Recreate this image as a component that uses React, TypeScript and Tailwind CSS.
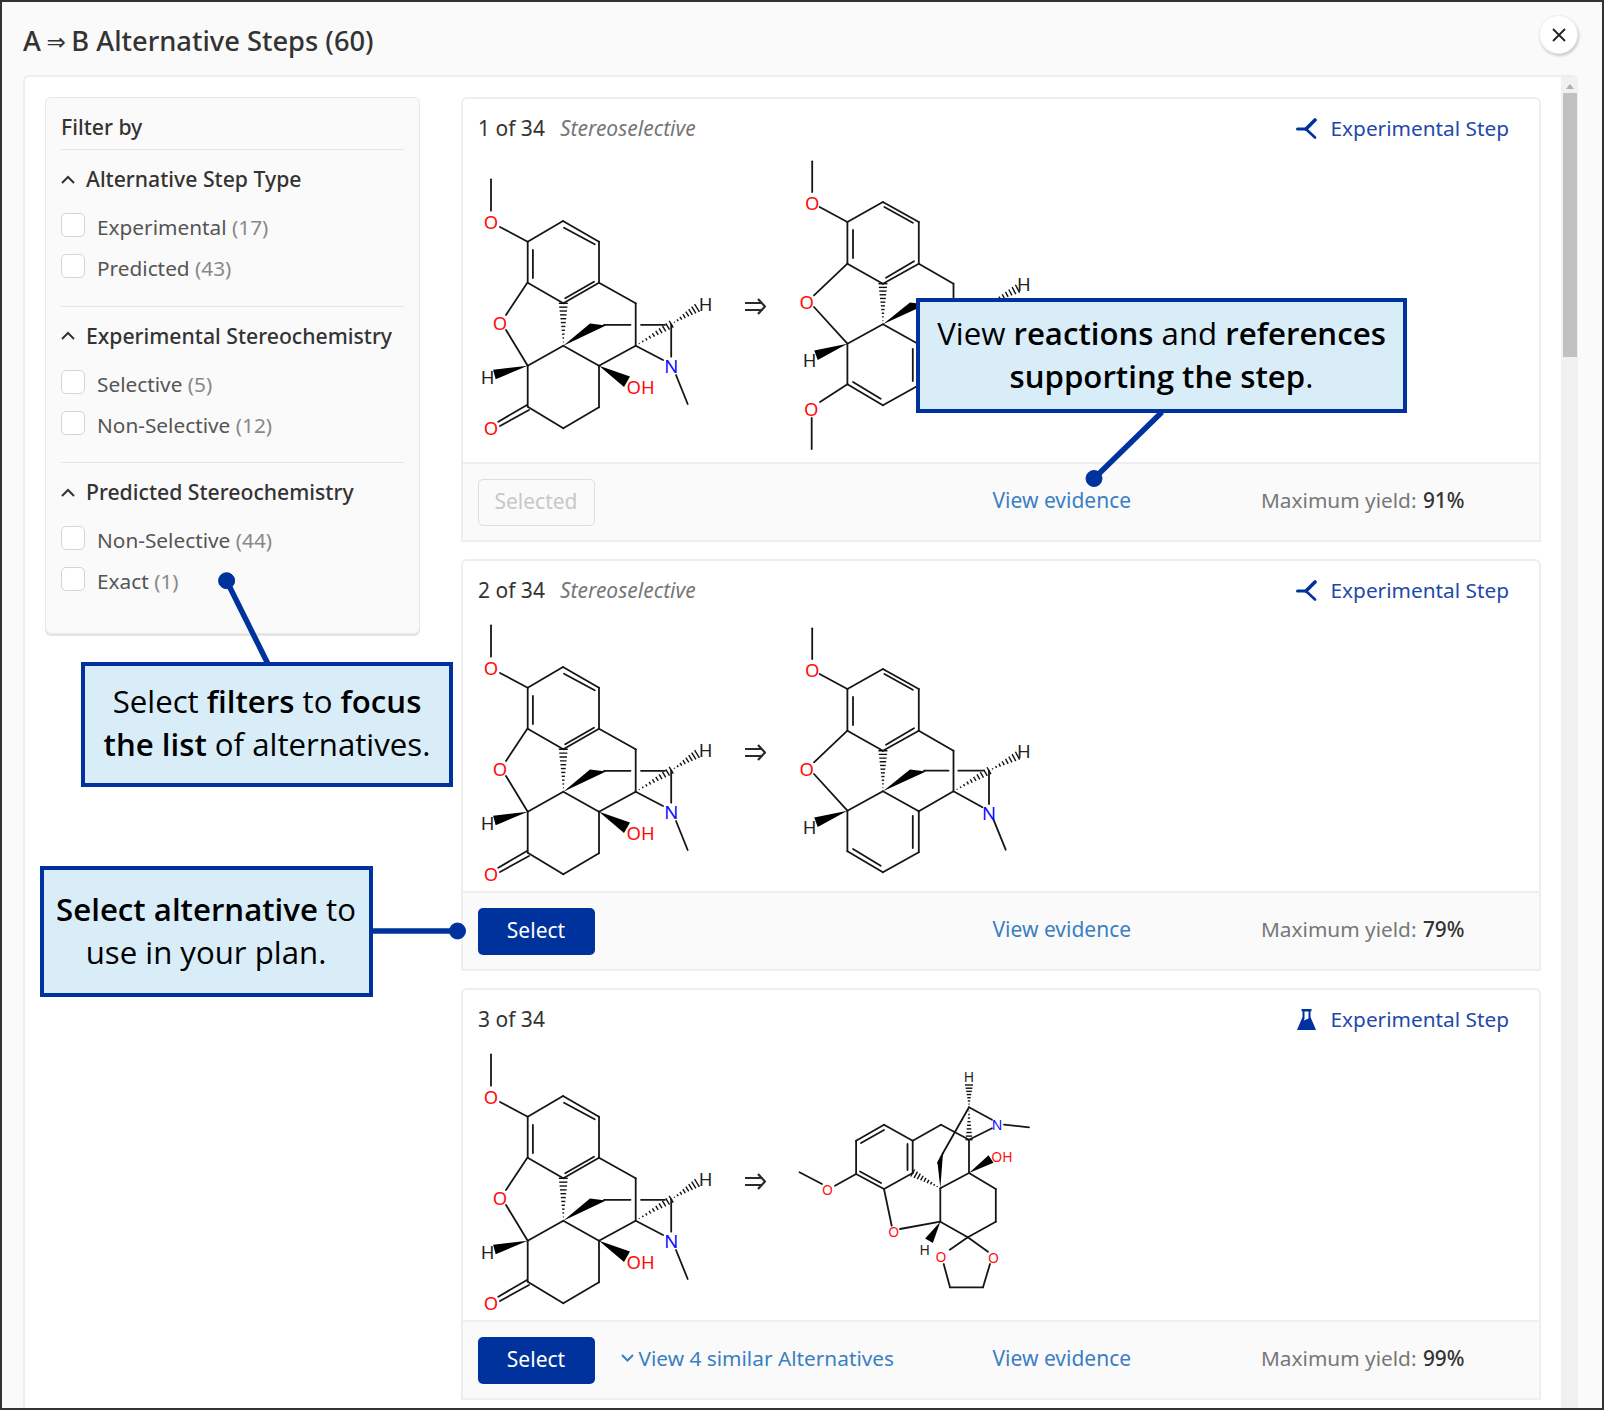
import React from 'react';

type L = number[];
type Lab = [string, number, number, string];

const RED = '#ff0d0d';
const BLUE = '#0d0dff';
const BLK = '#222222';

function wedgePts(x1: number, y1: number, x2: number, y2: number, w: number) {
  const dx = x2 - x1, dy = y2 - y1, n = Math.hypot(dx, dy);
  const px = (-dy / n) * w, py = (dx / n) * w;
  return `${x1},${y1} ${x2 + px},${y2 + py} ${x2 - px},${y2 - py}`;
}

function Hash({ h }: { h: number[] }) {
  const [x1, y1, x2, y2, w, c] = h;
  const dx = x2 - x1, dy = y2 - y1, n = Math.hypot(dx, dy);
  const ux = -dy / n, uy = dx / n;
  const items = [];
  for (let i = 1; i <= c; i++) {
    const t = i / c;
    const cx = x1 + dx * t, cy = y1 + dy * t, hw = w * t;
    items.push(<line key={i} x1={cx - ux * hw} y1={cy - uy * hw} x2={cx + ux * hw} y2={cy + uy * hw} stroke="#111" strokeWidth={1.4} />);
  }
  return <g>{items}</g>;
}

function Mol({ lines, wedges, polys, hashes, labels, vb, w, h, fs = 18.5 }: { lines: L[]; wedges: L[]; polys?: string[]; hashes: L[]; labels: Lab[]; vb: string; w: number; h: number; fs?: number }) {
  return (
    <svg viewBox={vb} width={w} height={h} className="block shrink-0 overflow-visible">
      {lines.map((l, i) => (
        <line key={i} x1={l[0]} y1={l[1]} x2={l[2]} y2={l[3]} stroke="#161616" strokeWidth={1.8} strokeLinecap="round" />
      ))}
      {wedges.map((p, i) => (
        <polygon key={i} points={wedgePts(p[0], p[1], p[2], p[3], p[4])} fill="#000" />
      ))}
      {(polys ?? []).map((p, i) => (
        <polygon key={i} points={p} fill="#000" />
      ))}
      {hashes.map((p, i) => (
        <Hash key={i} h={p} />
      ))}
      {labels.map((t, i) => (
        <text key={i} x={t[1]} y={t[2]} fill={t[3]} fontSize={fs} textAnchor="middle" dominantBaseline="central" fontFamily="'Noto Sans', sans-serif">
          {t[0]}
        </text>
      ))}
    </svg>
  );
}

const leftMol = {
  lines: [
    [491, 179.3, 491, 210.7], [500, 227, 527.7, 241.7], [527.7, 241.7, 563, 221], [563, 221, 599, 241.7], [599, 241.7, 599, 282.7],
    [599, 282.7, 563.3, 303.3], [563.3, 303.3, 527.7, 282.7], [527.7, 282.7, 527.7, 241.7],
    [532.9, 250, 532.9, 278], [564, 227.7, 594.7, 244.3], [594, 281.7, 565.2, 298.3],
    [599, 282.7, 635.7, 303.3], [635.7, 303.3, 635.7, 345.7], [527, 283.3, 506, 315], [506, 330, 527.7, 365.7],
    [527.7, 365.7, 563.3, 345.7], [563.3, 345.7, 599, 365.7], [599, 365.7, 635.7, 345.7],
    [527.7, 365.7, 527.7, 406.7], [527.7, 406.7, 563.3, 428.3], [563.3, 428.3, 599, 407.3], [599, 407.3, 599, 365.7],
    [527, 405, 498.3, 421.7], [529, 410, 500, 426],
    [635.7, 345.7, 663, 360], [671.2, 356.7, 671.2, 324.3], [676, 375, 687.7, 404],
    [604, 324.8, 630.5, 324.8], [641, 324.8, 665, 324.8],
  ],
  polys: ['563.3,345.7 590,323.6 606,325.5'],
  wedges: [
    [527.7, 365.7, 494.4, 374.5, 5],
    [599, 365.7, 627, 381.7, 6],
  ],
  hashes: [
    [563.3, 345.7, 563.3, 303.3, 4.5, 11],
    [635.7, 345.7, 671.2, 324.3, 4, 10],
    [671.2, 324.3, 697, 308, 4.5, 8],
  ],
  labels: [
    ['O', 491, 221, RED], ['O', 500, 322.3, RED], ['O', 491, 427.7, RED], ['OH', 640.6, 386.7, RED],
    ['N', 671.2, 365.7, BLUE], ['H', 705.7, 303.5, BLK], ['H', 487.5, 376.7, BLK],
  ] as Lab[],
};

const rightA = {
  lines: [
    [812.2, 629.3, 812.2, 660], [819.6, 675, 847.4, 690], [847.4, 690, 882.9, 670], [882.9, 670, 918.8, 690], [918.8, 690, 918.8, 731.7],
    [918.8, 731.7, 882.9, 751.7], [882.9, 751.7, 847.4, 731.7], [847.4, 731.7, 847.4, 690],
    [853, 698, 853, 726], [884.4, 675, 912.8, 690.7], [914, 729.3, 886, 745.7],
    [918.8, 731.7, 953.5, 751.7], [953.5, 751.7, 953.5, 792.3],
    [847.4, 731.7, 814, 763.3], [814, 775, 847.4, 811.7],
    [847.4, 811.7, 882.9, 792.3], [882.9, 792.3, 918.8, 812.3], [918.8, 812.3, 953.5, 792.3],
    [847.4, 811.7, 847.4, 852.3], [847.4, 852.3, 882.9, 873.3], [882.9, 873.3, 918.8, 853.3], [918.8, 853.3, 918.8, 812.3],
    [912.8, 817, 912.8, 849], [853, 850, 880.7, 866.7],
    [953.5, 792.3, 982.4, 808.3], [989, 805, 989, 771.7], [993.5, 820.7, 1005.7, 850.7],
    [924, 771.7, 948.5, 771.7], [958.3, 771.7, 983, 771.7],
  ],
  polys: ['882.9,792.3 910,770.5 926,772.5'],
  wedges: [
    [847.4, 811.7, 816, 823.3, 5],
  ],
  hashes: [
    [882.9, 792.3, 882.9, 751.7, 4.5, 11],
    [953.5, 792.3, 989, 771.7, 4, 10],
    [989, 771.7, 1017.5, 756.7, 4.5, 8],
  ],
  labels: [
    ['O', 812.2, 670, RED], ['O', 806.7, 769.3, RED], ['N', 989, 813.3, BLUE], ['H', 1023.8, 751.8, BLK], ['H', 809.6, 827.3, BLK],
  ] as Lab[],
};

const rightA1 = {
  ...rightA,
  lines: [...rightA.lines, [847.4, 852.3, 820, 870], [811.7, 886, 811.7, 917]],
  labels: [...rightA.labels.filter((t) => t[0] !== 'N'), ['O', 811.3, 876, RED]] as Lab[],
};

const rightB = {
  lines: [
    [799.5, 1173.3, 822, 1185], [835, 1186.7, 856.1, 1175], [856.1, 1175, 856.1, 1141.7], [856.1, 1141.7, 884, 1125.7], [884, 1125.7, 912.7, 1141.7],
    [912.7, 1141.7, 912.7, 1174], [912.7, 1174, 884, 1190], [884, 1190, 856.1, 1175],
    [861, 1144, 884, 1131], [907.5, 1145, 907.5, 1171], [881, 1184, 860, 1172.5],
    [912.7, 1141.7, 941, 1125.7], [941, 1125.7, 969, 1140.7], [969, 1108.3, 943, 1154], [943, 1154, 938, 1164], [969, 1108.3, 992, 1120.7], [969, 1140.7, 992, 1129.3],
    [1004, 1125.7, 1029, 1128.3], [969, 1140.7, 969, 1174],
    [969, 1174, 995.8, 1190], [995.8, 1190, 995.8, 1222.7], [995.8, 1222.7, 967.8, 1238.3], [940.3, 1222.7, 967.8, 1238.3],
    [940.3, 1189.3, 969, 1174], [940.3, 1189.3, 940.3, 1222.7], [884, 1190, 891.7, 1226.7], [900, 1230, 940.3, 1222.7],
    [967.8, 1238.3, 949.8, 1250.7], [967.8, 1238.3, 988, 1252.7], [943.7, 1265, 950, 1288.3], [950, 1288.3, 983, 1288.3], [983, 1288.3, 990, 1265],
  ],
  polys: ['940.3,1189.3 937.5,1163.5 943,1154'],
  wedges: [
    [969, 1174, 991, 1160, 4.5],
    [940.3, 1222.7, 929, 1241.7, 4.5],
  ],
  hashes: [
    [969, 1108.3, 969, 1086, 4, 7],
    [969, 1108.3, 969, 1140.7, 3.5, 9],
    [940.3, 1189.3, 912.7, 1174, 4, 9],
  ],
  labels: [
    ['O', 827.4, 1190, RED], ['O', 893.6, 1232.7, RED], ['O', 941, 1257.3, RED], ['O', 993.5, 1258, RED], ['OH', 1002, 1157.7, RED],
    ['N', 997, 1125.7, BLUE], ['H', 969, 1077.7, BLK], ['H', 924.6, 1250, BLK],
  ] as Lab[],
};

function Arrow() {
  return (
    <svg viewBox="0 0 21 17" className="ml-[25px] mr-[34px] mt-[3px] h-[17px] w-[21px] shrink-0" fill="none" stroke="#2a2a2a" strokeWidth={2.2}>
      <path d="M0 5h17M0 12h17M13 1l7 7.5-7 7.5" />
    </svg>
  );
}

function BranchIcon() {
  return (
    <svg viewBox="0 0 22 21" className="h-[21px] w-[22px]" fill="none" stroke="#00329e" strokeLinecap="round">
      <path d="M1.5 11H10" strokeWidth={3} />
      <path d="M10 11L19 2" strokeWidth={3.6} />
      <path d="M11 12L19 19.5" strokeWidth={2.6} />
    </svg>
  );
}

function FlaskIcon() {
  return (
    <svg viewBox="0 0 19 21" className="mx-[1.5px] h-[21px] w-[19px]" fill="#00329e">
      <path d="M4.5 0H14.5V2.2H13.5V8L19 21H0L5.5 8V2.2H4.5ZM7.5 2.5V9.5L6.8 11.5L11.5 9.5V2.5Z" fillRule="evenodd" />
    </svg>
  );
}

function Check({ label, count }: { label: string; count: string }) {
  return (
    <div className="flex h-[24px] items-start">
      <span className="h-[24px] w-[24px] shrink-0 rounded-[5px] border border-[#d4d4d4] bg-white" />
      <span className="ml-[12px] mt-[2px] whitespace-nowrap text-[20.8px] leading-[24px] text-[#555555]">
        {label} <span className="text-[#888888]">{count}</span>
      </span>
    </div>
  );
}

function Section({ title, a, b, last }: { title: string; a: [string, string]; b: [string, string]; last?: boolean }) {
  return (
    <div className={`border-t border-[#e6e6e6] pt-[14px] ${last ? 'pb-[42px]' : 'pb-[27.5px]'}`}>
      <div className="flex h-[30px] items-center">
        <svg viewBox="0 0 14 9" className="h-[9px] w-[14px]" fill="none" stroke="#333" strokeWidth={2}>
          <path d="M1 8l6-6 6 6" />
        </svg>
        <span className="ml-[11px] whitespace-nowrap text-[21.2px] font-medium leading-[30px] text-[#333333]">{title}</span>
      </div>
      <div className="mt-[19px] flex flex-col gap-[17px]">
        <Check label={a[0]} count={a[1]} />
        <Check label={b[0]} count={b[1]} />
      </div>
    </div>
  );
}

function Card({ n, stereo, body, bodyH, flask, selected, similar, yieldV, mt }: { n: number; stereo?: boolean; body: React.ReactNode; bodyH: string; flask?: boolean; selected?: boolean; similar?: boolean; yieldV: string; mt?: string }) {
  return (
    <div className={`overflow-hidden rounded-t-[6px] border-2 border-[#eeeeee] bg-white ${mt ?? ''}`}>
      <div className="flex h-[48px] items-start justify-between pl-[15px] pr-[30px] pt-[15px]">
        <div className="flex items-baseline whitespace-nowrap text-[21px] leading-[28px]">
          <span className="text-[#333333]">{n} of 34</span>
          {stereo && <span className="ml-[15px] italic text-[#777777]">Stereoselective</span>}
        </div>
        <div className="flex items-center">
          {flask ? <FlaskIcon /> : <BranchIcon />}
          <span className="ml-[13px] whitespace-nowrap text-[20.8px] leading-[28px] text-[#1f49a8]">Experimental Step</span>
        </div>
      </div>
      <div className={`flex items-center pl-[17px] ${bodyH}`}>{body}</div>
      <div className="flex h-[78px] items-center border-t-2 border-[#eeeeee] bg-[#fafafa] pl-[14.5px]">
        {selected ? (
          <div className="flex h-[47px] w-[117px] shrink-0 items-center justify-center rounded-[5px] border border-[#dedede] text-[21px] text-[#c8c8c8]">Selected</div>
        ) : (
          <div className="flex h-[47px] w-[117px] shrink-0 items-center justify-center rounded-[5px] bg-[#00329e] text-[21px] text-white">Select</div>
        )}
        <div className="ml-[26px] flex w-[372px] shrink-0 items-center pb-[4px]">
          {similar && (
            <>
              <svg viewBox="0 0 13 8" className="h-[8px] w-[13px]" fill="none" stroke="#3a7fc1" strokeWidth={2}>
                <path d="M1 1l5.5 5.5L12 1" />
              </svg>
              <span className="ml-[5px] whitespace-nowrap text-[20.8px] leading-[28px] text-[#3a7fc1]">View 4 similar Alternatives</span>
            </>
          )}
        </div>
        <span className="w-[268.5px] shrink-0 whitespace-nowrap pb-[4px] text-[21px] leading-[28px] text-[#3a7fc1]">View evidence</span>
        <span className="whitespace-nowrap pb-[4px] text-[20.8px] leading-[28px] text-[#777777]">
          Maximum yield: <span className="ml-[1px] font-medium text-[#333333]">{yieldV}</span>
        </span>
      </div>
    </div>
  );
}

function Left() {
  return <Mol {...leftMol} vb="480 170 240 270" w={240} h={270} />;
}

export default function App() {
  return (
    <div className="relative h-[1410px] w-[1604px] overflow-hidden bg-[#fafafa] font-['Noto_Sans',sans-serif]">
      <div className="flex h-[75px] items-center pl-[23px]">
        <h1 className="mt-[8px] whitespace-nowrap text-[27.3px] font-medium leading-[36px] text-[#333333]">
          A <span className="relative top-[-1px] mx-[-1.5px] font-['DejaVu_Sans',sans-serif] text-[23px] font-normal">⇒</span> B Alternative Steps (60)
        </h1>
      </div>

      <div className="ml-[23px] flex h-[1335px] w-[1555px] rounded-t-[6px] border-2 border-b-0 border-[#eeeeee] bg-white pl-[20px] pt-[20px]">
        <div className="w-[375px] shrink-0">
          <div className="rounded-[6px] border border-[#e8e8e8] bg-[#fafafa] px-[15px] shadow-[0_2px_0_#e4e4e4]">
            <div className="h-[51px] pt-[15px] text-[21.2px] font-medium leading-[28px] text-[#333333]">Filter by</div>
            <Section title="Alternative Step Type" a={['Experimental', '(17)']} b={['Predicted', '(43)']} />
            <Section title="Experimental Stereochemistry" a={['Selective', '(5)']} b={['Non-Selective', '(12)']} />
            <Section title="Predicted Stereochemistry" a={['Non-Selective', '(44)']} b={['Exact', '(1)']} last />
          </div>
        </div>

        <div className="ml-[41px] w-[1080px] shrink-0">
          <Card
            n={1}
            stereo
            bodyH="h-[315px]"
            selected
            yieldV="91%"
            body={
              <>
                <Left />
                <Arrow />
                <Mol {...rightA1} vb="800 620 240 306" w={240} h={306} />
              </>
            }
          />
          <Card
            n={2}
            stereo
            mt="mt-[17px]"
            bodyH="h-[282px] pt-[2px]"
            yieldV="79%"
            body={
              <>
                <Left />
                <Arrow />
                <Mol {...rightA} vb="800 622 240 261" w={240} h={261} />
              </>
            }
          />
          <Card
            n={3}
            flask
            similar
            mt="mt-[17px]"
            bodyH="h-[282px] pt-[2px]"
            yieldV="99%"
            body={
              <>
                <Left />
                <Arrow />
                <Mol {...rightB} vb="800 1071 240 220" w={240} h={220} fs={14} />
              </>
            }
          />
        </div>

        <div className="-mt-[20px] ml-[20px] flex w-[16px] shrink-0 flex-col items-center bg-[#f1f1f1] pl-[2px]">
          <svg viewBox="0 0 8 5" className="mt-[7px] h-[5px] w-[8px]" fill="#b0b0b0">
            <path d="M4 0l4 5H0z" />
          </svg>
          <div className="mt-[4px] h-[264px] w-[14px] bg-[#c1c1c1]" />
        </div>
      </div>

      {/* close */}
      <div className="absolute left-[1539px] top-[15px] flex h-[39px] w-[39px] items-center justify-center rounded-full border border-[#eeeeee] bg-white shadow-[1px_2px_3px_rgba(0,0,0,0.2)]">
        <svg viewBox="0 0 14 14" className="h-[14px] w-[14px]" fill="none" stroke="#222" strokeWidth={1.8}>
          <path d="M1 1l12 12M13 1L1 13" />
        </svg>
      </div>

      {/* callout connectors */}
      <svg viewBox="0 0 1604 1410" className="pointer-events-none absolute inset-0 h-[1410px] w-[1604px]" stroke="#00329e" fill="#00329e">
        <line x1="1162" y1="412" x2="1094" y2="478.5" strokeWidth={5.5} />
        <circle cx="1094" cy="478.5" r="8" />
        <line x1="268" y1="664" x2="226.6" y2="580.7" strokeWidth={5.5} />
        <circle cx="226.6" cy="580.7" r="8" />
        <line x1="372" y1="931" x2="457.5" y2="931" strokeWidth={5.5} />
        <circle cx="457.5" cy="931" r="8" />
      </svg>

      <div className="absolute left-[916px] top-[298px] flex h-[115px] w-[491px] flex-col items-center justify-center border-4 border-[#00329e] bg-[#d9edf9] pb-[2px] font-['Open_Sans',sans-serif] text-[31.2px] leading-[43px] text-black">
        <div className="whitespace-nowrap">View <b className="font-semibold">reactions</b> and <b className="font-semibold">references</b></div>
        <div className="whitespace-nowrap font-semibold">supporting the step<span className="font-normal">.</span></div>
      </div>

      <div className="absolute left-[81px] top-[662px] flex h-[125px] w-[372px] flex-col items-center justify-center border-4 border-[#00329e] bg-[#d9edf9] pb-[4px] font-['Open_Sans',sans-serif] text-[31.2px] leading-[43px] text-black">
        <div className="whitespace-nowrap">Select <b className="font-semibold">filters</b> to <b className="font-semibold">focus</b></div>
        <div className="whitespace-nowrap"><b className="font-semibold">the list</b> of alternatives.</div>
      </div>

      <div className="absolute left-[39.5px] top-[866px] flex h-[131px] w-[333px] flex-col items-center justify-center border-4 border-[#00329e] bg-[#d9edf9] pb-[2px] font-['Open_Sans',sans-serif] text-[31.2px] leading-[43px] text-black">
        <div className="whitespace-nowrap"><b className="font-semibold">Select alternative</b> to</div>
        <div className="whitespace-nowrap">use in your plan.</div>
      </div>

      {/* outer frame */}
      <div className="pointer-events-none absolute inset-0 border-2 border-[#333333]" />
    </div>
  );
}
